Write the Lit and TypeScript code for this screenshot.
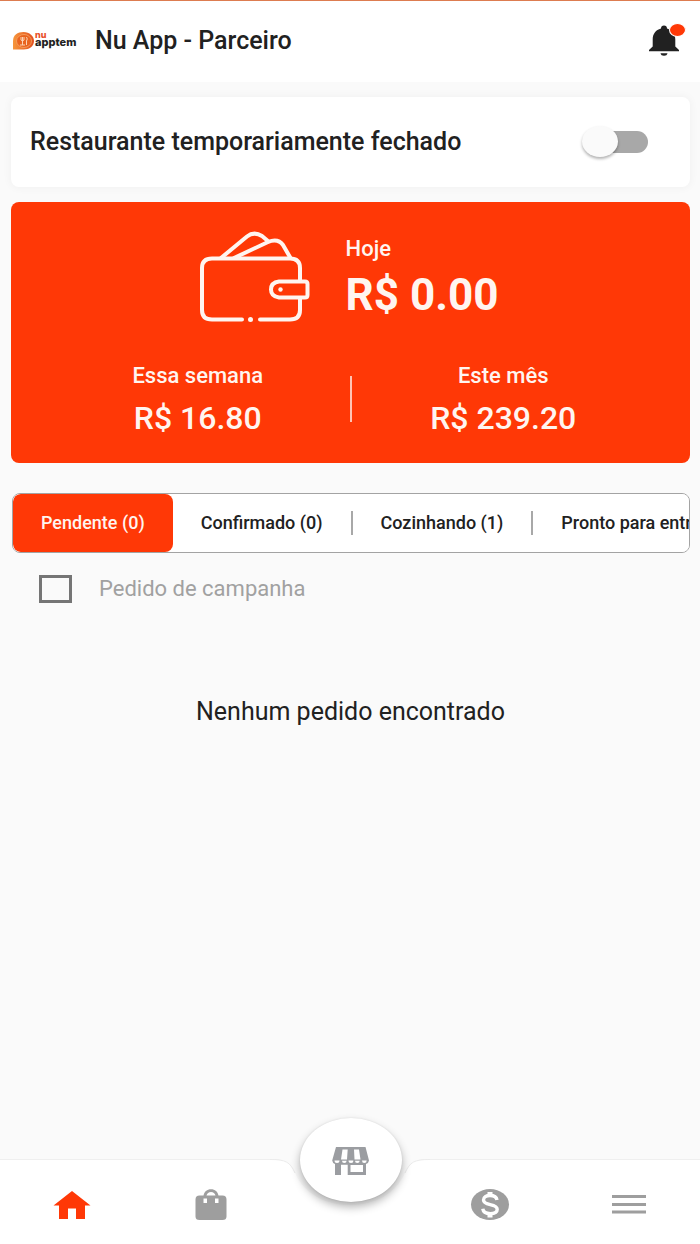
import { LitElement, html, css, svg } from "lit";
import { customElement, state } from "lit/decorators.js";
import { classMap } from "lit/directives/class-map.js";

const walletIcon = html`
  <svg class="wallet" viewBox="0 0 112 94" aria-hidden="true">
    <g fill="none" stroke="#fff5f0" stroke-width="4" stroke-linecap="round" stroke-linejoin="round">
      <path d="M43 89.500H13Q3 89.500 3 80V38Q3 28.500 13 28.500H91Q101 28.500 101 38V51M101 68V80Q101 89.500 91 89.500H61" />
      <path d="M80 51.500H106Q108.500 51.500 108.500 54V65Q108.500 67.500 106 67.500H80Q72 66.500 72 59.500Q72 52.500 80 51.500Z" />
      <path d="M22 28L48 6.500Q55 1 63 6L69.500 11.500" />
      <path d="M35 28L69 12Q79 8 84 15L91.500 28" />
    </g>
    <circle cx="81.500" cy="59.500" r="2.200" fill="#fff5f0" />
    <circle cx="51.500" cy="89.500" r="2.500" fill="#fff5f0" />
  </svg>
`;

const bellIcon = html`
  <svg class="bell" viewBox="0 0 32 32" aria-hidden="true">
    <path fill="#212121" d="M16 0.500C17.900 0.500 19 1.800 19 3.600C24.300 5 27.300 9 27.300 14.500V21.500L31 25V26.300H1V25L4.700 21.500V14.500C4.700 9 7.700 5 13 3.600C13 1.800 14.100 0.500 16 0.500Z" />
    <path fill="#212121" d="M12.500 28.300H19.500Q19 30.800 16 30.800Q13 30.800 12.500 28.300Z" />
  </svg>
`;

const icons = {
  home: svg`<path d="M20 3L38.500 17.500H33V31H24V20.500H16V31H7V17.500H1.500Z" />`,
  bag: svg`<path fill-rule="evenodd" d="M8.500 7.500H12.500C13.200 3.500 16 1.200 20 1.200S26.800 3.500 27.500 7.500H31.500Q35.500 7.500 35.500 11.500V28.500Q35.500 32 31.500 32H8.500Q4.500 32 4.500 28.500V11.500Q4.500 7.500 8.500 7.500ZM15.500 7.500H24.500C23.900 5.300 22.300 4.100 20 4.100S16.100 5.300 15.500 7.500ZM12.500 10.500V15H16V10.500ZM24 10.500V15H27.500V10.500Z" />`,
  store: svg`<path fill-rule="evenodd" d="M5 3H34.500L38 16.500Q37.500 19.500 35 20V31H4V20Q1.700 19.500 1.200 16.500ZM11.500 5.500L10 15.500H16L16.700 5.500ZM23 5.500L23.500 15.500H29.500L28 5.500ZM3.500 16.500Q3.500 19 6 19T8.500 16.500ZM11 16.800Q11 19 13.300 19T15.600 16.800ZM17.500 16.500Q17.500 19 20 19T22.300 16.500ZM24 16.800Q24 19 26.300 19T28.700 16.800ZM31 16.500Q31 19 33.300 19T35.700 16.500ZM10 20.700V31H16.700V20.700ZM19.500 21V28H32V21Z" />`,
  money: svg`<ellipse cx="20" cy="16.500" rx="19" ry="15.500" /><path fill="none" stroke="#fff" stroke-width="3.400" d="M27 12C26.500 8.800 23.800 7.500 20 7.500S13.500 9.200 13.500 12C13.500 14.900 16.300 15.800 20.200 16.600C24.800 17.600 27.200 18.700 27.200 21.300C27.200 24.200 24.300 25.600 20.200 25.600C15.900 25.600 13.200 24 12.800 20.800" /><path fill="#fff" d="M17.500 4H22.500V8H17.500ZM17.500 25.500H22.500V29.500H17.500Z" />`,
  menu: svg`<path d="M3 7H37V10H3ZM3 15H37V18H3ZM3 22.500H37V25.500H3Z" />`,
};

@customElement("app-switch")
class AppSwitch extends LitElement {
  static styles = css`
    :host {
      display: block;
    }
    .row {
      display: flex;
      align-items: center;
      justify-content: space-between;
      gap: 16px;
    }
    .switch {
      appearance: none;
      position: relative;
      flex: none;
      width: 66px;
      height: 32px;
      margin: 0;
      cursor: pointer;
    }
    .switch::before {
      content: "";
      position: absolute;
      inset: 5px 0 5px 4px;
      border-radius: 12px;
      background: #a8a8a8;
    }
    .switch::after {
      content: "";
      position: absolute;
      left: 0;
      top: 0;
      width: 36px;
      height: 31px;
      border-radius: 50%;
      background: #fafafa;
      box-shadow: 0 2px 3px rgba(0, 0, 0, 0.3);
    }
    .switch:checked::before {
      background: #ff9c80;
    }
    .switch:checked::after {
      left: 30px;
      background: #ff3806;
    }
  `;

  render() {
    return html`
      <label class="row">
        <span><slot></slot></span>
        <input class="switch" type="checkbox" role="switch" />
      </label>
    `;
  }
}

@customElement("app-root")
class AppRoot extends LitElement {
  @state() private tab = 0;

  private tabs = ["Pendente (0)", "Confirmado (0)", "Cozinhando (1)", "Pronto para entrega (0)"];

  static styles = css`
    :host {
      display: flex;
      flex-direction: column;
      min-height: 100vh;
      box-sizing: border-box;
      border-top: 1px solid #dd7c50;
      background: #fafafa;
      color: #212121;
      font-family: Roboto, "Liberation Sans", sans-serif;
      font-weight: 500;
    }
    * {
      box-sizing: border-box;
    }
    button {
      font: inherit;
      color: inherit;
      border: 0;
      padding: 0;
      background: none;
      cursor: pointer;
    }
    .header {
      display: flex;
      align-items: center;
      height: 81px;
      padding: 0 14px 2px 12px;
      background: #fff;
    }
    .logo {
      flex: none;
      width: 68px;
      height: 22px;
    }
    .nu {
      font: 800 9px Inter, sans-serif;
      fill: #e8502a;
    }
    .apptem {
      font: 800 11px Inter, sans-serif;
      fill: #222;
    }
    .title {
      flex: 1;
      margin: 0;
      padding-left: 15px;
      font-size: 25px;
      line-height: 32px;
      font-weight: 500;
    }
    .alerts {
      display: block;
      position: relative;
      width: 38px;
      height: 36px;
    }
    .bell {
      display: block;
      width: 32px;
      height: 32px;
    }
    .dot {
      position: absolute;
      right: 0;
      top: 0;
      width: 17px;
      height: 14px;
      border: 1px solid #fff;
      border-radius: 50%;
      background: #ff3806;
    }
    .main {
      display: flex;
      flex-direction: column;
      padding: 15px 10px 32px 11px;
    }
    .status {
      padding: 29px 42px 29px 19px;
      border-radius: 8px;
      background: #fff;
      box-shadow: 0 0 10px rgba(0, 0, 0, 0.05);
      font-size: 25px;
      line-height: 32px;
    }
    .earnings {
      display: flex;
      flex-direction: column;
      gap: 38px;
      margin-top: 15px;
      padding: 28px 35px 27px;
      border-radius: 8px;
      background: #ff3806;
      color: #fff5f0;
      text-align: center;
    }
    .today {
      display: flex;
      align-items: center;
      justify-content: center;
      gap: 35px;
      padding-right: 4px;
      text-align: left;
    }
    .wallet {
      width: 112px;
      height: 94px;
    }
    .periods {
      display: grid;
      grid-template-columns: 1fr 2px 1fr;
      align-items: center;
    }
    .rule {
      height: 46px;
      background: #ffc3b3;
    }
    .label {
      font-size: 22px;
      line-height: 28px;
    }
    .amount {
      padding-top: 10px;
      font-size: 32px;
      line-height: 36px;
    }
    .big {
      padding-top: 8px;
      font-size: 44px;
      line-height: 48px;
      font-weight: 700;
    }
    .tabs {
      display: flex;
      margin: 30px 0 0 1px;
      border: 1px solid #a3a3a3;
      border-radius: 8px;
      background: #fff;
      overflow-x: auto;
      scrollbar-width: none;
    }
    .tab {
      display: flex;
      flex: none;
      align-items: center;
      height: 58px;
      font-size: 18px;
      line-height: 24px;
      white-space: nowrap;
    }
    .tab-text {
      padding: 0 28px;
    }
    .split {
      border-right: 2px solid #a8a8a8;
    }
    .active {
      border-radius: 8px;
      background: #ff3806;
      color: #fff5f0;
    }
    .campaign {
      display: flex;
      align-items: center;
      align-self: flex-start;
      gap: 27px;
      margin: 20px 0 0 28px;
      color: #a1a1a1;
      font-size: 22px;
      line-height: 32px;
      font-weight: 400;
    }
    .check {
      appearance: none;
      width: 33px;
      height: 28px;
      margin: 0;
      border: 3px solid #757575;
    }
    .check:checked {
      border-color: #ff3806;
      background: #ff3806;
    }
    .empty {
      margin: 91px 0 0;
      text-align: center;
      font-size: 25px;
      line-height: 32px;
      font-weight: 400;
    }
    .nav {
      position: relative;
      display: grid;
      grid-template-columns: repeat(5, 1fr);
      height: 85px;
      margin-top: auto;
      padding: 0 1px 0 2px;
      border-top: 1px solid #efefef;
      background: #fff;
    }
    .notch {
      position: absolute;
      left: 50%;
      top: -1px;
      width: 160px;
      height: 54px;
      margin-left: -80px;
    }
    .item {
      display: grid;
      place-items: center;
      padding-top: 4px;
      color: #9e9e9e;
    }
    .current {
      color: #ff3806;
    }
    .icon {
      display: block;
      width: 40px;
      height: 33px;
      fill: currentColor;
    }
    .shop {
      position: absolute;
      left: 50%;
      top: -42px;
      display: grid;
      place-items: center;
      width: 102px;
      height: 84px;
      margin-left: -50px;
      border-radius: 50%;
      background: #fff;
      color: #9b9da1;
      box-shadow: 0 5px 10px rgba(0, 0, 0, 0.3), 0 0 2px rgba(0, 0, 0, 0.1);
    }
  `;

  private navItem(name: "home" | "bag" | "money" | "menu", label: string) {
    return html`
      <button class=${classMap({ item: true, current: name === "home" })} aria-label=${label}>
        <svg class="icon" viewBox="0 0 40 33" aria-hidden="true">${icons[name]}</svg>
      </button>
    `;
  }

  render() {
    return html`
      <header class="header">
        <svg class="logo" viewBox="0 0 68 22" role="img">
          <defs>
            <linearGradient id="mark" x1="0" x2="1" y1="0" y2="0">
              <stop offset="0" stop-color="#f6963c" />
              <stop offset="1" stop-color="#e2501f" />
            </linearGradient>
          </defs>
          <path fill="url(#mark)" d="M1 19.500V11C1 5 5.500 2 11.500 2S22 6 22 11S17.500 19.500 11.500 19.500Z" />
          <ellipse cx="12" cy="11" rx="7.500" ry="6.500" fill="#e9641f" stroke="#f8a566" stroke-width="0.800" />
          <path fill="none" stroke="#fbd3b4" stroke-width="1" d="M9 7V10Q10.500 12 12 10V7M10.500 7V15M14.500 7Q16 9 14.500 11V15M8 15H13" />
          <text class="nu" x="23" y="8">nu</text>
          <text class="apptem" x="23" y="16">apptem</text>
        </svg>
        <h1 class="title">Nu App - Parceiro</h1>
        <button class="alerts" aria-label="Notificações">${bellIcon}<span class="dot"></span></button>
      </header>

      <main class="main">
        <section class="status">
          <app-switch>Restaurante temporariamente fechado</app-switch>
        </section>

        <section class="earnings">
          <div class="today">
            ${walletIcon}
            <div>
              <div class="label">Hoje</div>
              <div class="big">R$ 0.00</div>
            </div>
          </div>
          <div class="periods">
            <div>
              <div class="label">Essa semana</div>
              <div class="amount">R$ 16.80</div>
            </div>
            <div class="rule"></div>
            <div>
              <div class="label">Este mês</div>
              <div class="amount">R$ 239.20</div>
            </div>
          </div>
        </section>

        <div class="tabs" role="tablist">
          ${this.tabs.map(
            (name, i) => html`
              <button
                class=${classMap({ tab: true, active: i === this.tab })}
                role="tab"
                aria-selected=${i === this.tab}
                @click=${() => (this.tab = i)}
              >
                <span class=${classMap({ "tab-text": true, split: i > 0 && i < this.tabs.length - 1 })}>${name}</span>
              </button>
            `
          )}
        </div>

        <label class="campaign"><input class="check" type="checkbox" />Pedido de campanha</label>
        <p class="empty">Nenhum pedido encontrado</p>
      </main>

      <nav class="nav">
        <svg class="notch" viewBox="0 0 160 54" aria-hidden="true">
          <path fill="#fafafa" d="M0 0C16 0 20 3 25 14C34 34 54 46 80 46S126 34 135 14C140 3 144 0 160 0Z" />
          <path fill="none" stroke="#ebebeb" d="M0 0.500C16 0.500 20 3 25 14M135 14C140 3 144 0.500 160 0.500" />
        </svg>
        ${this.navItem("home", "Início")}
        ${this.navItem("bag", "Pedidos")}
        <span></span>
        ${this.navItem("money", "Ganhos")}
        ${this.navItem("menu", "Menu")}
        <button class="shop" aria-label="Loja">
          <svg class="icon" viewBox="0 0 40 33" aria-hidden="true">${icons.store}</svg>
        </button>
      </nav>
    `;
  }
}
